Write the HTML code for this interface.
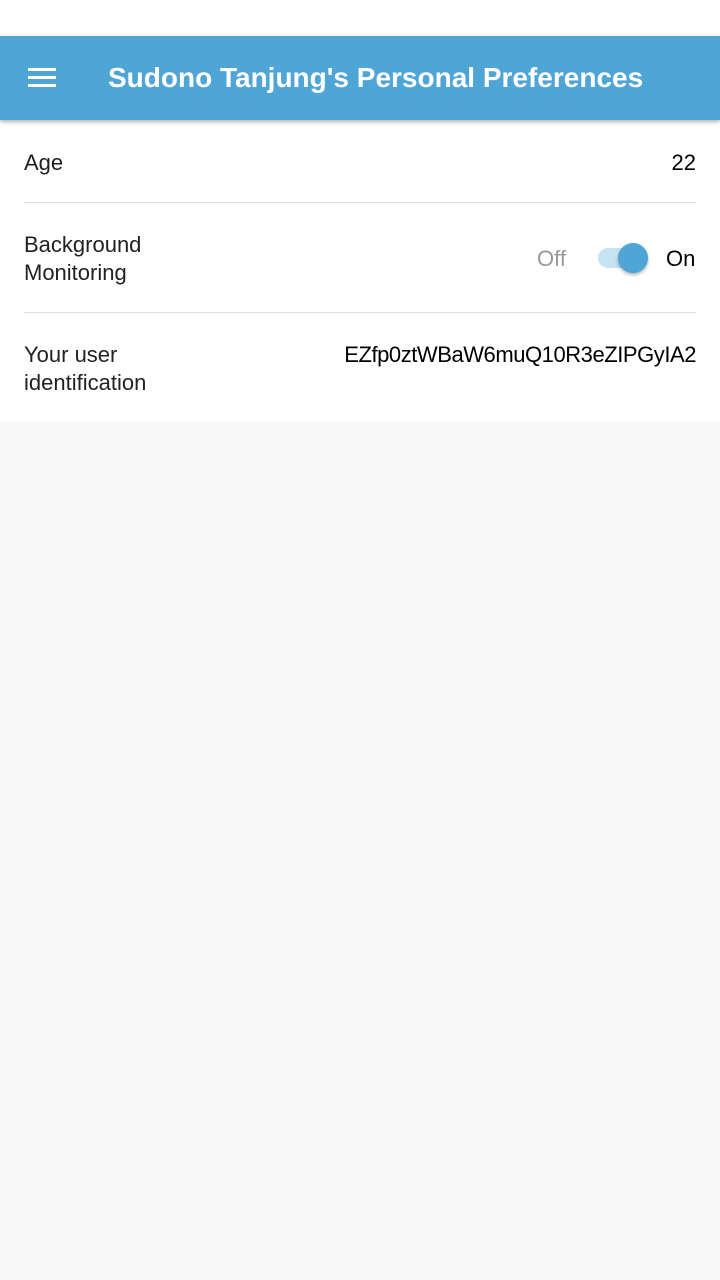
<!DOCTYPE html>
<html><head><style>
body{margin:0;width:720px;height:1280px;background:#f9f9f9;font-family:"Liberation Sans",sans-serif;position:relative;overflow:hidden}
.top{position:absolute;top:0;left:0;width:720px;height:36px;background:#fff}
.hdr{position:absolute;top:36px;left:0;width:720px;height:84px;background:#4fa5d6;box-shadow:0 2px 4px rgba(0,0,0,.3)}
.hdr .t{position:absolute;left:108px;top:26px;color:#fff;font-size:28px;font-weight:bold;letter-spacing:0px}
.bar{position:absolute;left:28px;width:28px;height:3px;background:#fff}
.content{position:absolute;top:120px;left:0;width:720px;height:302px;background:#fff}
.txt{position:absolute;font-size:22px;color:#222;line-height:28px}
.div{position:absolute;left:24px;width:672px;height:1px;background:#ddd}
</style></head><body>
<div class="top"></div>
<div class="content">
<div class="txt" style="left:24px;top:29px">Age</div>
<div class="txt" style="right:24px;top:29px;color:#000">22</div>
<div class="div" style="top:82px"></div>
<div class="txt" style="left:24px;top:111px">Background<br>Monitoring</div>
<div class="txt" style="left:537px;top:125px;color:#999">Off</div>
<div style="position:absolute;left:598px;top:128px;width:44px;height:20px;border-radius:10px;background:#c7e2f1"></div>
<div style="position:absolute;left:618px;top:123px;width:30px;height:30px;border-radius:50%;background:#4fa5d6;box-shadow:0 2px 3px rgba(0,0,0,.3)"></div>
<div class="txt" style="left:666px;top:125px;color:#000">On</div>
<div class="div" style="top:192px"></div>
<div class="txt" style="left:24px;top:221px">Your user<br>identification</div>
<div class="txt" style="right:24px;top:221px;color:#000;letter-spacing:-0.45px">EZfp0ztWBaW6muQ10R3eZIPGyIA2</div>
</div>
<div class="hdr">
<div class="bar" style="top:32px"></div><div class="bar" style="top:40px"></div><div class="bar" style="top:48px"></div>
<div class="t">Sudono Tanjung's Personal Preferences</div>
</div>
</body></html>
